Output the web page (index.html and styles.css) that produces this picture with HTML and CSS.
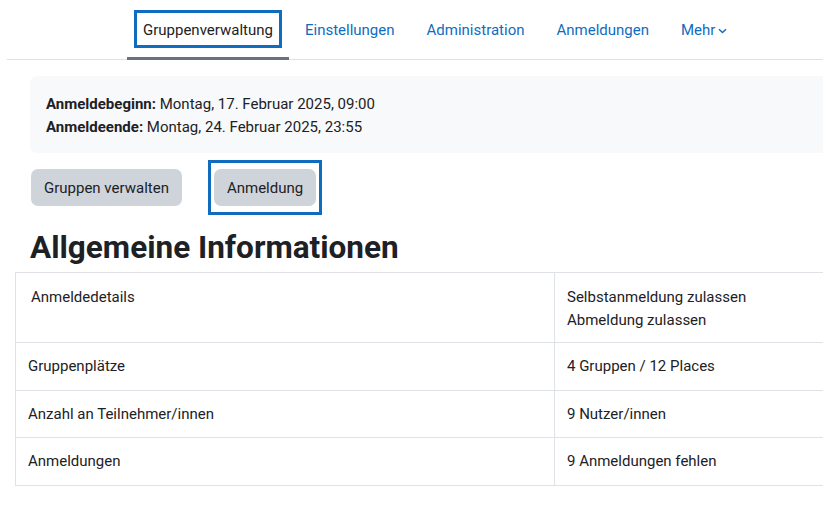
FILE: index.html
```html
<!DOCTYPE html>
<html lang="de">
<head>
<meta charset="utf-8">
<title>Gruppenverwaltung</title>
<link rel="stylesheet" href="styles.css">
</head>
<body>
<nav class="tabs">
  <ul class="tab-list">
    <li class="tab active"><a class="tab-link" href="#"><span class="tab-focus">Gruppenverwaltung</span></a></li>
    <li class="tab"><a class="tab-link" href="#"><span class="tab-focus">Einstellungen</span></a></li>
    <li class="tab"><a class="tab-link" href="#"><span class="tab-focus">Administration</span></a></li>
    <li class="tab"><a class="tab-link" href="#"><span class="tab-focus">Anmeldungen</span></a></li>
    <li class="tab"><a class="tab-link" href="#"><span class="tab-focus">Mehr<svg class="chev" width="9" height="6" viewBox="0 0 9 6"><path d="M1 1.2 L4.5 4.6 L8 1.2" fill="none" stroke="currentColor" stroke-width="1.4"/></svg></span></a></li>
  </ul>
</nav>
<main class="content">
  <div class="info-box">
    <div class="info-line"><strong>Anmeldebeginn:</strong> Montag, 17. Februar 2025, 09:00</div>
    <div class="info-line"><strong>Anmeldeende:</strong> Montag, 24. Februar 2025, 23:55</div>
  </div>
  <div class="actions">
    <span class="btn-wrap"><button class="btn">Gruppen verwalten</button></span>
    <span class="btn-wrap focused"><button class="btn">Anmeldung</button></span>
  </div>
  <h2 class="heading">Allgemeine Informationen</h2>
  <table class="info-table">
    <tr class="first-row">
      <td class="col-label"><span class="indent">Anmeldedetails</span></td>
      <td class="col-value"><div>Selbstanmeldung zulassen</div><div>Abmeldung zulassen</div></td>
    </tr>
    <tr>
      <td class="col-label">Gruppenplätze</td>
      <td class="col-value">4 Gruppen / 12 Places</td>
    </tr>
    <tr>
      <td class="col-label">Anzahl an Teilnehmer/innen</td>
      <td class="col-value">9 Nutzer/innen</td>
    </tr>
    <tr>
      <td class="col-label">Anmeldungen</td>
      <td class="col-value">9 Anmeldungen fehlen</td>
    </tr>
  </table>
</main>
</body>
</html>
```
FILE: styles.css
```css
html {
  overflow: hidden;
}
body {
  margin: 0;
  width: 1000px;
  font-family: Roboto, "Liberation Sans", sans-serif;
  font-size: 15px;
  color: #1d2125;
  background: #fff;
}
.tabs {
  margin-left: 7px;
}
.tab-list {
  list-style: none;
  margin: 0;
  padding: 0 0 0 120px;
  display: flex;
  border-bottom: 1px solid #dee2e6;
}
.tab {
  padding: 10px 7px 9px;
  border-bottom: 3px solid transparent;
  margin-bottom: -1px;
}
.tab.active {
  border-bottom-color: #6a737b;
}
.tab-link {
  display: block;
  text-decoration: none;
  color: #0f6cbf;
}
.tab-focus {
  display: flex;
  align-items: center;
  border: 3px solid transparent;
  padding: 7px 6px 5px;
  line-height: 20px;
}
.tab.active .tab-link {
  color: #1d2125;
}
.tab.active .tab-focus {
  border-color: #0f6cbf;
}
.chev {
  margin-left: 3px;
  margin-top: 1px;
}
.content {
  display: flex;
  flex-direction: column;
  align-items: flex-start;
}
.info-box {
  margin: 16px 0 0 30px;
  width: 900px;
  box-sizing: border-box;
  background: #f8f9fa;
  border-radius: 7px;
  padding: 17px 16px 14px;
  font-size: 15px;
  line-height: 23px;
}
.info-line strong {
  font-weight: 700;
}
.actions {
  display: flex;
  gap: 20px;
  margin: 7px 0 0 25px;
}
.btn-wrap {
  display: block;
  padding: 6px 3px;
  border: 3px solid transparent;
}
.btn-wrap.focused {
  border-color: #0f6cbf;
}
.btn {
  display: block;
  font-family: inherit;
  font-size: 15px;
  color: #1d2125;
  background: #ced4da;
  border: 0;
  border-radius: 7px;
  height: 37px;
  padding: 0 13px;
}
.heading {
  margin: 14px 0 0 30px;
  font-size: 31.5px;
  line-height: 38px;
  font-weight: 700;
}
.info-table {
  margin: 5px 0 0 15px;
  border-collapse: collapse;
  width: 1000px;
}
.info-table td {
  border: 1px solid #dee2e6;
  padding: 12px 12px;
  line-height: 22.5px;
  vertical-align: middle;
}
.info-table .first-row td {
  vertical-align: top;
  line-height: 23px;
  padding-top: 13px;
  padding-bottom: 10px;
}
.col-label {
  width: 514px;
}
.indent {
  padding-left: 3px;
}
```
